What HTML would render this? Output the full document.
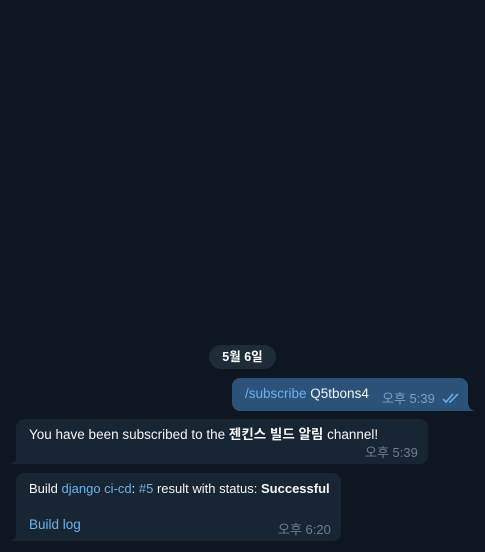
<!DOCTYPE html>
<html><head><meta charset="utf-8"><style>
html,body{margin:0;padding:0;width:485px;height:552px;overflow:hidden;background:#0e1621;font-family:"Liberation Sans","Noto Sans CJK KR",sans-serif;font-size:13.5px;color:#f5f5f5}
.a{position:absolute}
.pill{left:209px;top:345px;width:67px;height:24px;border-radius:12px;background:#1e2c3a;color:#fff;font-weight:bold;font-size:12.5px;text-align:center;line-height:24px}
.out{left:232px;top:378px;width:236px;height:33px;background:#2b5278;border-radius:8px 8px 0 8px}
.in{background:#182533;border-radius:8px 8px 8px 0}
.t{position:absolute;white-space:nowrap;line-height:16px}
.time{color:#6d7f8f;font-size:13px}
.link{color:#6ab2f2}
</style></head><body>
<div class="a pill">5월 6일</div>
<div class="a out">
 <div class="t" style="left:13px;top:8px"><span class="link">/subscribe</span> Q5tbons4</div>
 <div class="t time" style="left:150px;top:13px;color:#7ca0c4">오후 5:39</div>
 <svg class="a" style="left:210px;top:14px" width="20" height="12" viewBox="0 0 20 12"><path d="M1 7l3 3L11 2M7 10l1 0L16 2" stroke="#6ab2f2" stroke-width="1.5" fill="none"/></svg>
</div>
<svg class="a" style="left:468px;top:403px" width="8" height="8"><path d="M0 0 Q1 7 7 8 L0 8Z" fill="#2b5278"/></svg>
<div class="a in" style="left:16px;top:419px;width:412px;height:45px">
 <div class="t" style="left:13px;top:8px">You have been subscribed to the <b>젠킨스 빌드 알림</b> channel!</div>
 <div class="t time" style="left:349px;top:26px">오후 5:39</div>
</div>
<svg class="a" style="left:9px;top:456px" width="8" height="8"><path d="M8 0 Q7 7 0 8 L8 8Z" fill="#182533"/></svg>
<div class="a in" style="left:16px;top:473px;width:325px;height:68px">
 <div class="t" style="left:13px;top:8px;font-size:13px">Build <span class="link">django ci-cd</span>: <span class="link">#5</span> result with status: <b>Successful</b></div>
 <div class="t link" style="left:13px;top:44px">Build log</div>
 <div class="t time" style="left:262px;top:49px">오후 6:20</div>
</div>
<svg class="a" style="left:9px;top:533px" width="8" height="8"><path d="M8 0 Q7 7 0 8 L8 8Z" fill="#182533"/></svg>
</body></html>
